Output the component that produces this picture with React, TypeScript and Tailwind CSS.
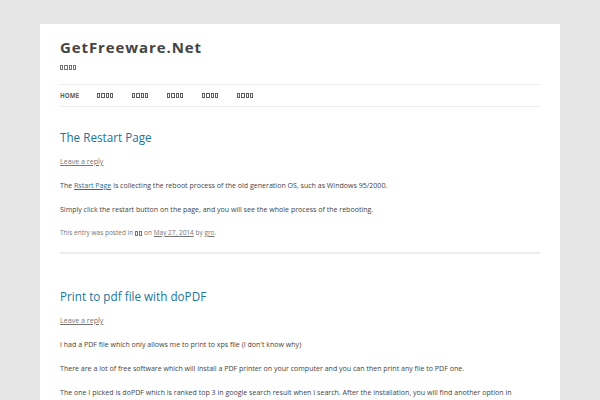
import React from "react";

function Tofu({ n }: { n: number }) {
  return (
    <span className="inline-flex items-center gap-[1px] align-middle" aria-label={"□".repeat(n)}>
      {Array.from({ length: n }).map((_, i) => (
        <span key={i} className="inline-block w-[3.25px] h-[5px] border-[0.8px] border-current" />
      ))}
    </span>
  );
}

function Post({ title, paras, meta }: { title: string; paras: React.ReactNode[]; meta?: boolean }) {
  return (
    <article className="flex flex-col">
      <h2 className="text-[11.7px] leading-[16px] text-[#21759b] font-normal">{title}</h2>
      <div className="mt-[10px] text-[7.1px] leading-[12px] text-[#757575] underline">Leave a reply</div>
      <div className="mt-[11px] flex flex-col gap-[10px] text-[7.05px] leading-[14px] text-[#444]">
        {paras.map((p, i) => (
          <p key={i} className="whitespace-nowrap">{p}</p>
        ))}
      </div>
      {meta && (
        <div className="mt-[10px] text-[6.5px] leading-[14px] text-[#757575]">
          This entry was posted in <span className="underline"><Tofu n={2} /></span> on{" "}
          <span className="underline">May 27, 2014</span> by <span className="underline">gro</span>.
        </div>
      )}
    </article>
  );
}

export default function App() {
  return (
    <div className="w-[600px] h-[400px] overflow-hidden bg-[#e6e6e6] pt-[24px] pl-[40px] pr-[40px]" style={{ fontFamily: '"Open Sans", sans-serif' }}>
      <div className="bg-white h-[400px] px-[20px] pt-[14px]">
        <header>
          <h1 className="text-[15px] leading-[19px] font-bold text-[#444] tracking-[0.9px]">GetFreeware.Net</h1>
          <div className="mt-[3px] text-[7px] leading-[14px] text-[#757575]"><Tofu n={4} /></div>
          <nav className="mt-[10px] h-[23px] border-y border-[#ededed] flex items-center gap-[19px] text-[6.2px] text-[#5e5e5e]">
            <span className="font-bold uppercase w-[18px]">Home</span>
            <Tofu n={4} />
            <Tofu n={4} />
            <Tofu n={4} />
            <Tofu n={4} />
            <Tofu n={4} />
          </nav>
        </header>
        <main className="mt-[22px]">
          <Post
            title="The Restart Page"
            meta
            paras={[
              <>The <span className="text-[#21759b] underline">Rstart Page</span> is collecting the reboot process of the old generation OS, such as Windows 95/2000.</>,
              <>Simply click the restart button on the page, and you will see the whole process of the rebooting.</>,
            ]}
          />
          <div className="mt-[12px] border-t-[2px] border-[#ededed]" />
          <div className="mt-[34px]">
            <Post
              title="Print to pdf file with doPDF"
              paras={[
                <>I had a PDF file which only allows me to print to xps file (I don't know why)</>,
                <>There are a lot of free software which will install a PDF printer on your computer and you can then print any file to PDF one.</>,
                <>The one I picked is doPDF which is ranked top 3 in google search result when I search. After the installation, you will find another option in</>,
              ]}
            />
          </div>
        </main>
      </div>
    </div>
  );
}
